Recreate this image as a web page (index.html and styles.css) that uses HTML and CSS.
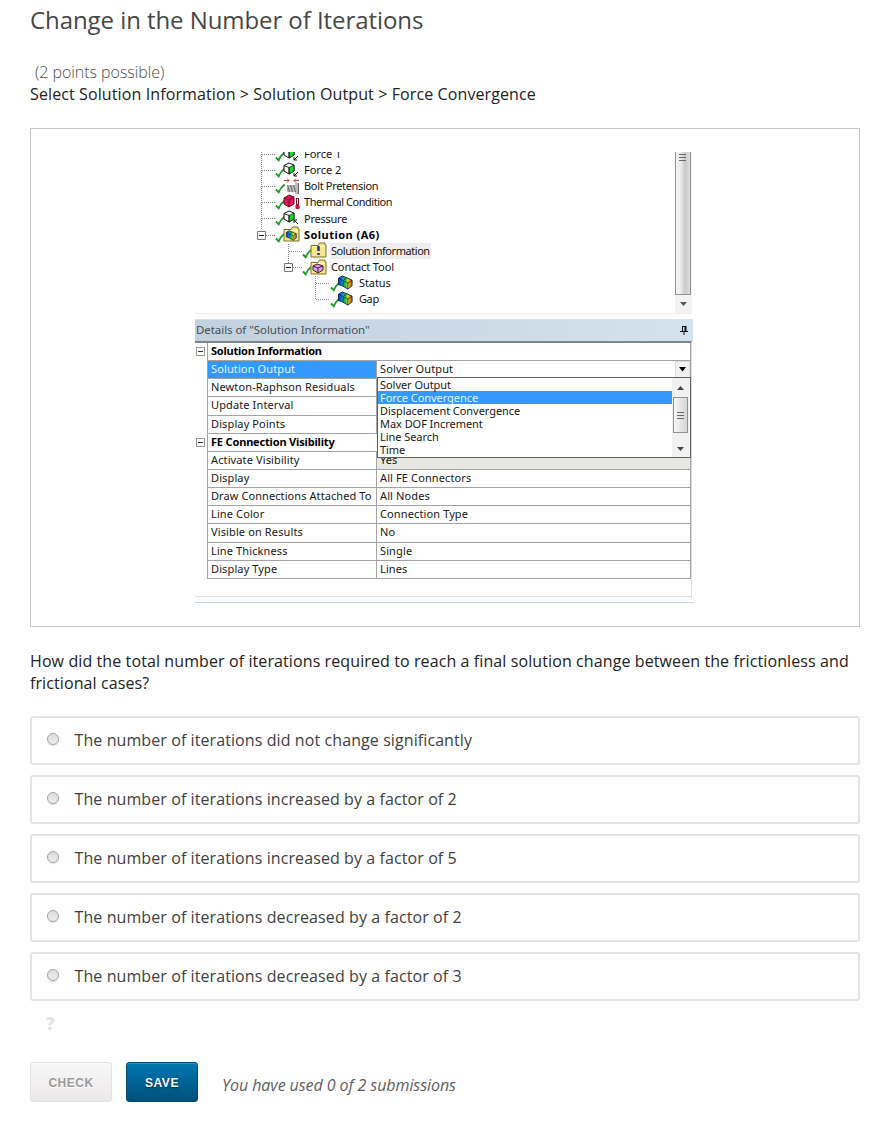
FILE: index.html
```
<!DOCTYPE html>
<html lang="en">
<head>
<meta charset="utf-8">
<title>Change in the Number of Iterations</title>
<link rel="stylesheet" href="styles.css">
</head>
<body>
<svg class="defs" width="0" height="0" aria-hidden="true">
  <defs>
    <linearGradient id="rainbow" x1="0" x2="1"><stop offset="0" stop-color="#0a2fd0"/><stop offset=".3" stop-color="#0b8fd8"/><stop offset=".5" stop-color="#12c83c"/><stop offset=".7" stop-color="#d8dc13"/><stop offset="1" stop-color="#f0380e"/></linearGradient>
    <symbol id="check" viewBox="0 0 11 11"><path d="M1 6.500 3.700 9.200Q5.500 4.500 9.700 1.400" fill="none" stroke="#1f9a2c" stroke-width="1.900"/></symbol>
    <symbol id="load" viewBox="0 0 17 16"><path d="M2 3.500 7 1l5 2v6l-5 3-5-3z" fill="#fff" stroke="#111"/><path d="M7 5.500 12 3v6l-5 3z" fill="#13dc32" stroke="#111" stroke-width=".7"/><path d="M2 3.500 7 5.500V12" fill="none" stroke="#111" stroke-width=".9"/></symbol>
    <symbol id="folder" viewBox="0 0 17 16"><path d="M1 15V3.500h7L9.500 1H15v2h1v12z" fill="#f7e68a" stroke="#807128"/><path d="M2 4.500h13" stroke="#fffad0"/></symbol>
    <symbol id="result" viewBox="0 0 17 16"><path d="M1 3.500 5 1l5 2 5.500 2.500v6L11 15l-5-3-5-2z" fill="url(#rainbow)" stroke="#132748"/><path d="M1 3.500 6 6l5 2.500 4.500-3M6 6v6m5-3.500V15M6 6l4-3" fill="none" stroke="#10304a" stroke-width=".8"/></symbol>
  </defs>
</svg>
<main class="problem">
  <h1 class="title">Change in the Number of Iterations</h1>
  <p class="points">(2 points possible)</p>
  <p class="instruction">Select Solution Information &gt; Solution Output &gt; Force Convergence</p>

  <figure class="frame">
    <div class="app">
      <div class="outline">
        <svg class="connectors" width="180" height="162" viewBox="0 0 180 162" aria-hidden="true">
          <path d="M66.500 0v78M67 2.500h13M67 18.500h13M67 34.500h13M67 50.500h13M67 66.500h13M71 83.500h10M93.500 92v19M94 99.500h13M98 115.500h10M120.500 124v24M121 131.500h13M121 147.500h13" fill="none" stroke="#888" stroke-dasharray="1 1"/>
          <path d="M62.500 79.500h8v8h-8zM89.500 111.500h8v8h-8z" fill="#fff" stroke="#777"/>
          <path d="M64 83.500h5M91 115.500h5" stroke="#222"/>
        </svg>
        <ul class="tree">
          <li class="node"><svg class="icon" viewBox="0 0 27 17"><use href="#check" x="1" y="5" width="11" height="11"/><use href="#load" x="8" y="0" width="17" height="16"/><path d="M24 10 20 14M20 11v3h3" fill="none" stroke="#111"/></svg><span class="t-force">Force 1</span></li>
          <li class="node"><svg class="icon" viewBox="0 0 27 17"><use href="#check" x="1" y="5" width="11" height="11"/><use href="#load" x="8" y="0" width="17" height="16"/><path d="M24 10 20 14M20 11v3h3" fill="none" stroke="#111"/></svg><span class="t-force">Force 2</span></li>
          <li class="node"><svg class="icon" viewBox="0 0 27 17"><use href="#check" x="1" y="5" width="11" height="11"/><path d="M10 2.500h5M13 .5l2 2-2 2M25 2.500h-5M22 .5l-2 2 2 2" fill="none" stroke="#c8453b"/><path d="M13 7h8V5h4v11h-4v-2h-8z" fill="#bbb"/><path d="m13.500 7 2 7m1-7 2 7m1-7 2 7M24.500 5v11" fill="none" stroke="#666"/></svg><span class="t-bolt">Bolt Pretension</span></li>
          <li class="node"><svg class="icon" viewBox="0 0 27 17"><use href="#check" x="1" y="5" width="11" height="11"/><path d="m10 4 5-3 5 2v7l-5 3-5-3z" fill="#e31358" stroke="#621027"/><path d="m10 4 5 2 5-3m-5 3v7" fill="none" stroke="#74132f"/><path d="M23.500 4v8" stroke="#8e1026" stroke-width="3"/><path d="M23.500 5v5" stroke="#fff"/><circle cx="23.500" cy="13" r="2.300" fill="#cf1438"/></svg><span class="t-thermal">Thermal Condition</span></li>
          <li class="node"><svg class="icon" viewBox="0 0 27 17"><use href="#check" x="1" y="5" width="11" height="11"/><use href="#load" x="8" y="0" width="17" height="16"/><path d="m20 10 4 4M20 13v-3h3" fill="none" stroke="#111"/></svg><span class="t-pressure">Pressure</span></li>
          <li class="node strong"><svg class="icon" viewBox="0 0 27 17"><use href="#check" x="1" y="6" width="11" height="11"/><use href="#folder" x="9" y="0" width="17" height="16"/><use href="#result" x="11" y="4" width="13" height="11"/></svg><span class="t-solution">Solution (A6)</span></li>
          <li class="node level-2"><svg class="icon" viewBox="0 0 27 17"><use href="#check" x="1" y="6" width="11" height="11"/><use href="#folder" x="9" y="0" width="17" height="16"/><path d="M17.500 4v5M17.500 11v2" stroke="#1921d4" stroke-width="2.400"/></svg><span class="t-info selected">Solution Information</span></li>
          <li class="node level-2"><svg class="icon" viewBox="0 0 27 17"><use href="#check" x="1" y="6" width="11" height="11"/><use href="#folder" x="9" y="0" width="17" height="16"/><path d="m12 7 4-2 6 2v4l-5 3-5-3z" fill="#dba0df" stroke="#3b204b"/><path d="m12 7 5 2 5-2m-5 2v5" fill="none" stroke="#3b204b"/></svg><span class="t-contact">Contact Tool</span></li>
          <li class="node level-3"><svg class="icon" viewBox="0 0 27 17"><use href="#check" x="1" y="6" width="11" height="11"/><use href="#result" x="8" y="0" width="17" height="15"/></svg><span class="t-status">Status</span></li>
          <li class="node level-3"><svg class="icon" viewBox="0 0 27 17"><use href="#check" x="1" y="6" width="11" height="11"/><use href="#result" x="8" y="0" width="17" height="15"/></svg><span class="t-gap">Gap</span></li>
        </ul>
        <div class="scroll">
          <div class="thumb"><svg width="8" height="9"><path d="M0 1.500h7M0 4.500h7M0 7.500h7" stroke="#666"/></svg></div>
          <div class="scroll-end"><svg width="7" height="4"><path d="M0 0h7L3.500 4z" fill="#555"/></svg></div>
        </div>
      </div>
      <div class="details-head"><span>Details of "Solution Information"</span><svg width="8" height="10" viewBox="0 0 8 10"><path d="M2.500 1v5M2 1.500h4M0 6.500h8M4 7v3" fill="none" stroke="#111"/><path d="M5.500 1v5" stroke="#111" stroke-width="2"/></svg></div>
      <div class="details">
        <div class="row group"><i class="minus"></i><b class="d-info">Solution Information</b></div>
        <div class="row"><div class="key active">Solution Output</div><div class="value combo"><span>Solver Output</span><span class="combo-button"><svg width="9" height="5"><path d="M1 0h7L4.500 4.500z"/></svg></span></div></div>
        <div class="row"><div class="key">Newton-Raphson Residuals</div><div class="value"></div></div>
        <div class="row"><div class="key">Update Interval</div><div class="value"></div></div>
        <div class="row"><div class="key">Display Points</div><div class="value"></div></div>
        <div class="row group"><i class="minus"></i><b class="d-fe">FE Connection Visibility</b></div>
        <div class="row"><div class="key">Activate Visibility</div><div class="value disabled">Yes</div></div>
        <div class="row"><div class="key">Display</div><div class="value">All FE Connectors</div></div>
        <div class="row"><div class="key d-draw">Draw Connections Attached To</div><div class="value">All Nodes</div></div>
        <div class="row"><div class="key">Line Color</div><div class="value">Connection Type</div></div>
        <div class="row"><div class="key">Visible on Results</div><div class="value">No</div></div>
        <div class="row"><div class="key">Line Thickness</div><div class="value">Single</div></div>
        <div class="row"><div class="key">Display Type</div><div class="value">Lines</div></div>
        <div class="menu">
          <ul class="menu-items"><li>Solver Output</li><li class="highlight">Force Convergence</li><li>Displacement Convergence</li><li>Max DOF Increment</li><li>Line Search</li><li>Time</li></ul>
          <div class="menu-scroll">
            <svg width="7" height="4"><path d="M0 4h7L3.500 0z" fill="#444"/></svg>
            <div class="menu-thumb"><svg width="7" height="9"><path d="M0 1.500h7M0 4.500h7M0 7.500h7" stroke="#666"/></svg></div>
            <svg width="7" height="4"><path d="M0 0h7L3.500 4z" fill="#444"/></svg>
          </div>
        </div>
      </div>
    </div>
  </figure>

  <p class="question">How did the total number of iterations required to reach a final solution change between the frictionless and<br>frictional cases?</p>
  <div class="choices">
    <label class="choice"><i class="radio"></i><span>The number of iterations did not change significantly</span></label>
    <label class="choice"><i class="radio"></i><span>The number of iterations increased by a factor of 2</span></label>
    <label class="choice"><i class="radio"></i><span>The number of iterations increased by a factor of 5</span></label>
    <label class="choice"><i class="radio"></i><span>The number of iterations decreased by a factor of 2</span></label>
    <label class="choice"><i class="radio"></i><span>The number of iterations decreased by a factor of 3</span></label>
  </div>
  <div class="unanswered">?</div>
  <div class="actions">
    <button class="button check">CHECK</button>
    <button class="button save">SAVE</button>
    <span class="usage">You have used 0 of 2 submissions</span>
  </div>
</main>
</body>
</html>
```
FILE: styles.css
```
* { box-sizing: border-box; }
body { margin: 0; background: #fff; font-family: "Open Sans", sans-serif; color: #222; overflow: hidden; }
p, h1, ul, figure { margin: 0; padding: 0; }
ul { list-style: none; }
svg { display: block; flex: none; }
.defs { position: absolute; }
.problem { width: 830px; margin-left: 30px; font-size: 16px; white-space: nowrap; }
.title { height: 61px; padding-top: 3px; font-size: 24px; line-height: 34px; font-weight: 400; color: #474747; letter-spacing: -.07px; }
.points { padding-left: 5px; line-height: 22px; font-weight: 300; color: #505050; letter-spacing: -.05px; }
.instruction { line-height: 22px; letter-spacing: .11px; }
.frame { height: 499px; margin-top: 23px; padding: 23px 0 0 164px; border: 1px solid #c8c8c8; }
.app { width: 499px; height: 451px; color: #222; border-bottom: 1px solid #c6d4e8; }

.outline { position: relative; display: flex; justify-content: space-between; height: 162px; width: 497px; overflow: hidden; border-bottom: 1px solid #eee; }
.connectors { position: absolute; left: 0; top: 0; }
.tree { margin-top: -6px; position: relative; font: 11px/16px "Noto Sans", sans-serif; color: #151515; }
.node { display: flex; align-items: center; height: 16.150px; padding-left: 79px; }
.level-2 { padding-left: 106px; }
.level-3 { padding-left: 134px; }
.icon { width: 27px; height: 17px; margin-right: 3px; }
.strong { font-weight: 700; color: #000; }
.t-bolt { letter-spacing: -.33px; }
.t-thermal { letter-spacing: -.47px; }
.t-pressure { letter-spacing: -.24px; }
.t-solution { letter-spacing: .46px; }
.t-info { letter-spacing: -.45px; }
.t-contact { letter-spacing: -.1px; }
.t-status { letter-spacing: -.08px; }
.t-gap { letter-spacing: -.4px; }
.selected { background: #eee; margin-left: -1px; padding: 0 1px; }
.scroll { width: 17px; display: flex; flex-direction: column; background: #f2f2f2; }
.thumb { height: 143px; padding: 1px 3px; width: 16px; border: 1px solid #929292; border-top: 0; background: linear-gradient(90deg, #f5f5f5, #ededee 30%, #c9cacd 65%, #dddddf); }
.scroll-end { flex: 1; display: grid; place-items: center; }

.details-head { height: 22px; width: 498px; margin-top: 5px; display: flex; justify-content: space-between; align-items: center; padding: 0 5px 1px 1px; border-top: 1px solid #d8e2eb; background: linear-gradient(90deg, #c3d0de, #d4e2ee); font: 11.500px/20px "Noto Sans", sans-serif; letter-spacing: -.06px; color: #454f59; }
.details { position: relative; height: 256px; width: 497px; border-top: 2px solid #7c858e; border-right: 1px solid #ddd; border-bottom: 1px solid #e1e4e4; font: 11px/16px "Noto Sans", sans-serif; letter-spacing: .12px; color: #181818; }
.row { display: flex; height: 18.150px; margin-left: 12px; border: solid #a4a4a4; border-width: 0 1px 1px; }
.group { position: relative; padding-left: 3px; color: #000; }
.minus { position: absolute; left: -12px; top: 4px; width: 9px; height: 9px; border: 1px solid #999; background: linear-gradient(#333, #333) center / 5px 1px no-repeat #fff; }
.d-info { letter-spacing: -.22px; }
.d-fe { letter-spacing: -.17px; }
.key { width: 169px; padding-left: 3px; border-right: 1px solid #a4a4a4; flex: none; }
.d-draw { letter-spacing: .08px; }
.active { background: #3399ff; color: #e5f1ff; }
.value { flex: 1; padding-left: 3px; }
.combo { display: flex; justify-content: space-between; }
.combo-button { display: grid; place-items: center; width: 15px; background: #f2f2f2; border: 1px solid #ddd; }
.disabled { background: #e6e6e2; }
.menu { position: absolute; left: 182px; top: 34px; width: 314px; height: 81px; display: flex; justify-content: space-between; background: #fff; border: 1px solid #606060; line-height: 13px; letter-spacing: -.05px; }
.menu-items { width: 294px; padding-top: 0; overflow: hidden; }
.menu-items li { height: 13.100px; padding-left: 2px; }
.menu-items .highlight { background: #3399ff; color: #e5f1ff; }
.menu-scroll { width: 18px; padding: 8px 2px 6px 0; background: #f1f1f1; display: flex; flex-direction: column; align-items: center; justify-content: space-between; }
.menu-thumb { width: 15px; height: 36px; margin-top: -4px; margin-bottom: 3px; display: grid; place-items: center; border: 1px solid #929292; background: linear-gradient(90deg, #f7f7f7, #d5d5d8); }

.question { margin-top: 23px; line-height: 22px; letter-spacing: .1px; }
.choices { margin-top: 22px; display: flex; flex-direction: column; gap: 10px; }
.choice { height: 49px; display: flex; align-items: center; gap: 15.500px; padding: 0 0 2px 15px; border: 2px solid #e4e4e4; border-radius: 3px; color: #414141; letter-spacing: .09px; }
.radio { width: 12px; height: 12px; margin-top: -1px; border: 1px solid #a4a4a4; border-radius: 50%; background: linear-gradient(#dcdcdc, #eee); box-shadow: 0 1px 1px #ddd; }
.unanswered { height: 61px; padding: 12px 0 0 16px; font: 800 17px/22px "Open Sans", sans-serif; color: #e3e3e3; }
.actions { display: flex; height: 40px; align-items: center; }
.button { height: 40px; padding: 1px 0 0; border-radius: 3px; font: 700 12px/20px "Liberation Sans", sans-serif; letter-spacing: .5px; }
.check { width: 82px; border: 1px solid #e2e2e2; color: #9b9b9b; background: linear-gradient(#f8f8f8, #ebe8e8); text-shadow: 0 1px 0 #fff; }
.save { width: 72px; margin-left: 14px; border: 1px solid #0a4a70; color: #fff; background: linear-gradient(#0077b3, #00507a); box-shadow: inset 0 1px 0 #169bd8; text-shadow: 0 1px 2px #002f49; }
.usage { margin: 6px 0 0 24px; font-style: italic; color: #606060; letter-spacing: -.07px; }
```
